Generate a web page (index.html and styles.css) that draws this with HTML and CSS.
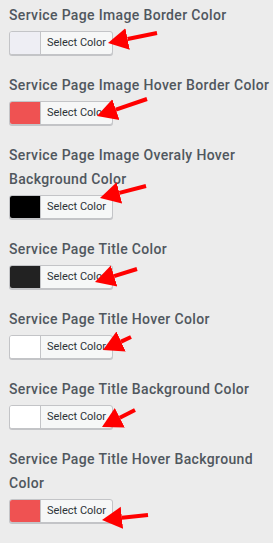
FILE: index.html
```html
<!DOCTYPE html>
<html lang="en">

<head>
    <meta charset="UTF-8">
    <meta name="viewport" content="width=device-width, initial-scale=1.0">
    <title>Service Page Colors</title>
    <link rel="stylesheet" href="styles.css">
</head>

<body>
    <div class="options">
        <div class="field">
            <p class="label">Service Page Image Border Color</p>
            <button class="color-result"><span class="swatch swatch-lavender"></span><span class="btn-text">Select Color</span></button>
        </div>
        <div class="field">
            <p class="label">Service Page Image Hover Border Color</p>
            <button class="color-result"><span class="swatch swatch-red"></span><span class="btn-text">Select Color</span></button>
        </div>
        <div class="field">
            <p class="label">Service Page Image Overaly Hover Background Color</p>
            <button class="color-result"><span class="swatch swatch-black"></span><span class="btn-text">Select Color</span></button>
        </div>
        <div class="field">
            <p class="label">Service Page Title Color</p>
            <button class="color-result"><span class="swatch swatch-dark"></span><span class="btn-text">Select Color</span></button>
        </div>
        <div class="field">
            <p class="label">Service Page Title Hover Color</p>
            <button class="color-result"><span class="swatch swatch-white"></span><span class="btn-text">Select Color</span></button>
        </div>
        <div class="field">
            <p class="label">Service Page Title Background Color</p>
            <button class="color-result"><span class="swatch swatch-white"></span><span class="btn-text">Select Color</span></button>
        </div>
        <div class="field">
            <p class="label">Service Page Title Hover Background Color</p>
            <button class="color-result"><span class="swatch swatch-red"></span><span class="btn-text">Select Color</span></button>
        </div>
    </div>

    <!-- annotation arrows drawn over the screenshot -->
    <svg class="arrows" width="273" height="543" viewBox="0 0 273 543">
        <defs>
            <marker id="head" markerUnits="userSpaceOnUse" viewBox="0 -12 21 24" markerWidth="21" markerHeight="24" refX="0" refY="0" orient="auto">
                <path d="M0,-11 L20,0 L0,11 z" fill="#ff0000" />
            </marker>
        </defs>
        <g stroke="#ff0000" stroke-width="4" marker-end="url(#head)">
            <line x1="157" y1="33" x2="127.6" y2="39" />
            <line x1="147" y1="99" x2="115.9" y2="109.6" />
            <line x1="146" y1="186" x2="119.4" y2="192.9" />
            <line x1="137" y1="269" x2="114.1" y2="276.1" />
            <line x1="131" y1="337" x2="121.1" y2="341.6" />
            <line x1="135" y1="410" x2="119.8" y2="417.8" />
            <line x1="148" y1="515" x2="121.9" y2="517.8" />
        </g>
    </svg>
</body>

</html>
```

FILE: styles.css
```css
body {
    margin: 0;
    background-color: #ececec;
    font-family: Roboto, "Liberation Sans", sans-serif;
}

.options {
    padding: 3px 0 0 9px;
}

.field {
    margin-bottom: 18px;
}

.label {
    margin: 0 0 4px;
    font-size: 14px;
    font-weight: 500;
    line-height: 24px;
    letter-spacing: 0.35px;
    color: #50575e;
}

.color-result {
    display: flex;
    width: 104px;
    height: 24px;
    padding: 0;
    border: 1px solid #c3c4c7;
    border-radius: 3px;
    background-color: #f6f7f7;
    box-shadow: 0 1px 0 #c3c4c7;
    overflow: hidden;
    cursor: pointer;
}

.swatch {
    width: 30px;
    height: 100%;
    flex: none;
}

.swatch-lavender {
    background-color: #eeeef4;
}

.swatch-red {
    background-color: #ef5252;
}

.swatch-black {
    background-color: #000;
}

.swatch-dark {
    background-color: #222;
}

.swatch-white {
    background-color: #fff;
}

.btn-text {
    flex: 1;
    border-left: 1px solid #c3c4c7;
    font-family: Roboto, "Liberation Sans", sans-serif;
    font-size: 11px;
    line-height: 22px;
    color: #2c3338;
    text-align: center;
}

.arrows {
    position: absolute;
    top: 0;
    left: 0;
    pointer-events: none;
}
```
